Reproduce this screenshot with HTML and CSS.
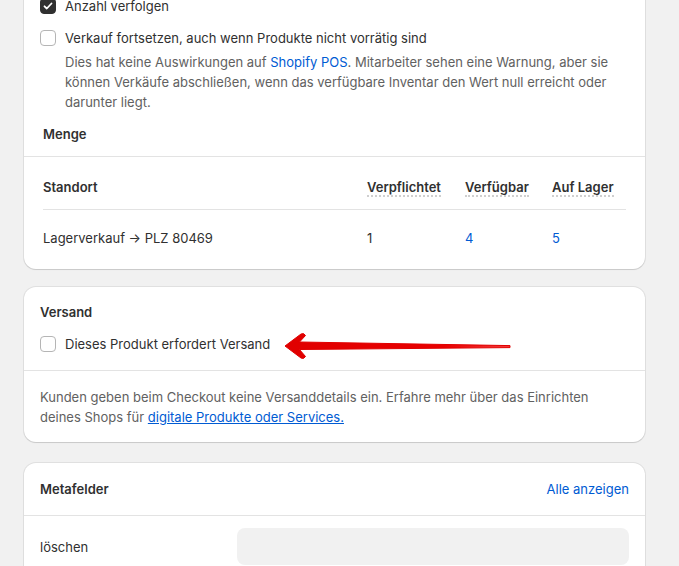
FILE: index.html
```html
<!DOCTYPE html>
<html lang="de">
<head>
    <meta charset="UTF-8">
    <meta name="viewport" content="width=device-width, initial-scale=1.0">
    <title>Produkt bearbeiten</title>
    <link rel="stylesheet" href="styles.css">
</head>
<body>
    <div class="page">

        <div class="card card-inventory">
            <div class="options">
                <label class="check-row">
                    <span class="checkbox checked">
                        <svg viewBox="0 0 16 16" width="16" height="16"><path d="M4.5 8.3l2.3 2.2 4.7-5" fill="none" stroke="#fff" stroke-width="1.8" stroke-linecap="round" stroke-linejoin="round"/></svg>
                    </span>
                    Anzahl verfolgen
                </label>
                <label class="check-row">
                    <span class="checkbox"></span>
                    Verkauf fortsetzen, auch wenn Produkte nicht vorrätig sind
                </label>
                <p class="help">Dies hat keine Auswirkungen auf <a href="#">Shopify POS</a>. Mitarbeiter sehen eine Warnung, aber sie<br>können Verkäufe abschließen, wenn das verfügbare Inventar den Wert null erreicht oder<br>darunter liegt.</p>
            </div>

            <h3 class="menge-title">Menge</h3>

            <div class="stock-table">
                <div class="stock-row head">
                    <span class="cell">Standort</span>
                    <span class="cell"><span class="dotted">Verpflichtet</span></span>
                    <span class="cell"><span class="dotted">Verfügbar</span></span>
                    <span class="cell"><span class="dotted">Auf Lager</span></span>
                </div>
                <div class="stock-row">
                    <span class="cell">Lagerverkauf → PLZ 80469</span>
                    <span class="cell">1</span>
                    <span class="cell"><a href="#">4</a></span>
                    <span class="cell"><a href="#">5</a></span>
                </div>
            </div>
        </div>

        <div class="card card-shipping">
            <div class="section top">
                <h3 class="card-title">Versand</h3>
                <label class="check-row">
                    <span class="checkbox"></span>
                    Dieses Produkt erfordert Versand
                </label>
            </div>
            <div class="section bottom">
                <p class="help">Kunden geben beim Checkout keine Versanddetails ein. Erfahre mehr über das Einrichten<br>deines Shops für <a class="underline" href="#">digitale Produkte oder Services.</a></p>
            </div>

            <!-- annotation arrow drawn over the card -->
            <svg class="red-arrow" viewBox="0 0 230 30" width="230" height="30">
                <defs>
                    <linearGradient id="arrowFill" x1="0" y1="0" x2="1" y2="0">
                        <stop offset="0" stop-color="#e00000"/>
                        <stop offset="0.7" stop-color="#e80000"/>
                        <stop offset="1" stop-color="#f43a3a"/>
                    </linearGradient>
                </defs>
                <path d="M2 15 L18 3 Q21 1.5 22.5 4.5 L16.5 11 L227 14.6 L227 16.6 L16.5 18.5 L22.5 25.5 Q21 28.5 18 27 Z" fill="url(#arrowFill)" stroke="#e00000" stroke-width="1" stroke-linejoin="round"/>
            </svg>
        </div>

        <div class="card card-meta">
            <div class="section top meta-head">
                <h3 class="card-title">Metafelder</h3>
                <a href="#">Alle anzeigen</a>
            </div>
            <div class="meta-row">
                <span class="meta-label">löschen</span>
                <span class="meta-input"></span>
            </div>
        </div>

    </div>
</body>
</html>
```

FILE: styles.css
```css
body {
    margin: 0;
    background-color: #f1f1f1;
    font-family: Inter, "Noto Sans", Arial, sans-serif;
    font-size: 13px;
    line-height: 20px;
    color: #303030;
}

a {
    color: #005bd3;
    text-decoration: none;
}

.page {
    width: 621px;
    margin: -20px 0 0 24px;
}

.card {
    position: relative;
    background-color: #fff;
    border-radius: 12px;
    box-shadow: 0 0 0 1px rgba(0, 0, 0, 0.07), 0 1px 1px rgba(0, 0, 0, 0.1);
}

.card-inventory {
    border-radius: 0 0 12px 12px;
    padding-bottom: 1px;
}

.card-shipping {
    margin-top: 18px;
}

.card-meta {
    margin-top: 21px;
    padding-bottom: 40px;
}

.options {
    padding: 16px 16px 0;
    display: flex;
    flex-direction: column;
    gap: 12px;
}

.check-row {
    display: flex;
    align-items: center;
    gap: 9px;
}

.checkbox {
    box-sizing: border-box;
    width: 16px;
    height: 16px;
    border: 1px solid #b5b5b5;
    border-radius: 4px;
    background-color: #fff;
    flex-shrink: 0;
    display: flex;
}

.checkbox.checked {
    background-color: #303030;
    border-color: #303030;
}

.checkbox.checked svg {
    margin: -1px;
}

.help {
    margin: -8px 0 0 25px;
    color: #616161;
}

.menge-title,
.card-title {
    margin: 0;
    font-size: 13px;
    font-weight: 600;
}

.menge-title {
    padding: 12px 19px;
    border-bottom: 1px solid #e3e3e3;
}

.stock-table {
    padding: 0 19px;
}

.stock-row {
    display: grid;
    grid-template-columns: 1fr 98px 87px 74px;
    padding: 18px 0 20px;
}

.stock-row.head {
    padding: 20px 0 12px;
    border-bottom: 1px solid #e3e3e3;
    font-weight: 600;
}

.dotted {
    border-bottom: 2px dotted #cfcfcf;
}

.section {
    padding: 0 16px;
}

.section.top {
    padding-top: 15px;
    padding-bottom: 16px;
    border-bottom: 1px solid #e3e3e3;
}

.card-shipping .section.top {
    display: flex;
    flex-direction: column;
    gap: 12px;
}

.section.bottom {
    padding-top: 16px;
    padding-bottom: 15px;
}

.section.bottom .help {
    margin: 0;
}

.underline {
    text-decoration: underline;
}

.red-arrow {
    position: absolute;
    left: 259px;
    top: 44px;
}

.card-meta .section.top {
    padding-top: 16px;
}

.meta-head {
    display: flex;
    justify-content: space-between;
    align-items: center;
}

.meta-row {
    display: flex;
    align-items: center;
    padding: 12px 16px 0;
}

.meta-label {
    width: 197px;
    flex-shrink: 0;
}

.meta-input {
    flex: 1;
    height: 37px;
    border-radius: 8px;
    background-color: #f1f1f1;
}
```
